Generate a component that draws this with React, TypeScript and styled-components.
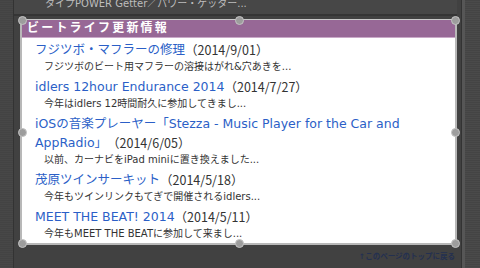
import styled, { createGlobalStyle } from 'styled-components';

type Entry = {
  title: string;
  date: string;
  summary: string;
};

const entries: Entry[] = [
  {
    title: 'フジツボ・マフラーの修理',
    date: '（2014/9/01）',
    summary: 'フジツボのビート用マフラーの溶接はがれ&穴あきを...',
  },
  {
    title: 'idlers 12hour Endurance 2014',
    date: '（2014/7/27）',
    summary: '今年はidlers 12時間耐久に参加してきまし...',
  },
  {
    title: 'iOSの音楽プレーヤー「Stezza - Music Player for the Car and AppRadio」',
    date: '（2014/6/05）',
    summary: '以前、カーナビをiPad miniに置き換えました...',
  },
  {
    title: '茂原ツインサーキット',
    date: '（2014/5/18）',
    summary: '今年もツインリンクもてぎで開催されるidlers...',
  },
  {
    title: 'MEET THE BEAT! 2014',
    date: '（2014/5/11）',
    summary: '今年もMEET THE BEATに参加して来まし...',
  },
];

// selection handles around the widget frame
const handles = [
  { left: '0%', top: '0%' },
  { left: '50%', top: '0%' },
  { left: '100%', top: '0%' },
  { left: '0%', top: '50%' },
  { left: '100%', top: '50%' },
  { left: '0%', top: '100%' },
  { left: '50%', top: '100%' },
  { left: '100%', top: '100%' },
];

const App = () => {
  return (
    <>
      <GlobalStyle />
      <Page>
        <LeftRail />
        <Main>
          <TopBar>
            <TopText>タイプPOWER Getter／パワー・ゲッター...</TopText>
          </TopBar>
          <Panel>
            <Header>ビートライフ更新情報</Header>
            <List>
              {entries.map((e) => (
                <Item key={e.date}>
                  <Title>
                    <Link href="#">{e.title}</Link>
                    <Date>{e.date}</Date>
                  </Title>
                  <Summary>{e.summary}</Summary>
                </Item>
              ))}
            </List>
            {handles.map((h, i) => (
              <Handle key={i} $left={h.left} $top={h.top} />
            ))}
          </Panel>
          <Footer>
            <TopLink href="#">↑このページのトップに戻る</TopLink>
          </Footer>
        </Main>
        <RightRail />
      </Page>
    </>
  );
};

const GlobalStyle = createGlobalStyle`
  body {
    margin: 0;
    background: #414141;
    font-family: "DejaVu Sans", "Noto Sans CJK JP", sans-serif;
  }
`;

const Page = styled.div`
  display: flex;
  width: 480px;
  height: 268px;
  overflow: hidden;
  background: #414141;
`;

const LeftRail = styled.div`
  width: 13px;
  flex-shrink: 0;
  background: repeating-linear-gradient(
    0deg,
    #474747 0px,
    #474747 1px,
    #434343 1px,
    #434343 2px
  );
  border-right: 1px solid #333;
`;

const RightRail = styled.div`
  width: 15px;
  flex-shrink: 0;
  border-left: 3px solid #565656;
  background: repeating-linear-gradient(
    0deg,
    #4a4a4a 0px,
    #4a4a4a 1px,
    #444 1px,
    #444 2px
  );
`;

const Main = styled.div`
  flex: 1;
  display: flex;
  flex-direction: column;
  padding: 0 4px 0 0;
  border-right: 1px solid #333;
`;

const TopBar = styled.div`
  height: 14px;
  background: #474747;
  border-bottom: 2px solid #353535;
  overflow: hidden;
  margin-bottom: 3px;
`;

const TopText = styled.div`
  margin: -4px 0 0 31px;
  font-size: 10px;
  line-height: 15px;
  color: #bdbdbd;
  white-space: nowrap;
`;

const Panel = styled.div`
  position: relative;
  margin-left: 6px;
  height: 226px;
  box-sizing: border-box;
  background: #fff;
  border: 2px solid #b8b8b8;
  border-top: 1px solid #c8c8c8;
`;

const Header = styled.div`
  height: 17px;
  background: #976896;
  border-bottom: 1px solid #c9a9c8;
  color: #fff;
  font-weight: bold;
  font-size: 12px;
  line-height: 17px;
  letter-spacing: 2.2px;
  padding-left: 5px;
`;

const List = styled.div`
  padding: 2px 10px 0 13px;
`;

const Item = styled.div`
  margin-bottom: 3px;
`;

const Title = styled.div`
  font-size: 12.5px;
  line-height: 19px;
`;

const Link = styled.a`
  color: #2b5fc7;
  text-decoration: none;
`;

const Date = styled.span`
  display: inline-block;
  vertical-align: top;
  line-height: 19px;
  font-family: "Noto Sans CJK JP", sans-serif;
  color: #333;
`;

const Summary = styled.div`
  font-size: 10px;
  line-height: 15px;
  color: #333;
  padding-left: 9px;
`;

const Handle = styled.div<{ $left: string; $top: string }>`
  position: absolute;
  left: ${(p) => p.$left};
  top: ${(p) => p.$top};
  width: 7px;
  height: 7px;
  margin: -4px 0 0 -4px;
  border-radius: 50%;
  background: #9d9d9d;
  border: 1px solid #c4c4c4;
`;

const Footer = styled.div`
  display: flex;
  justify-content: flex-end;
  padding: 5px 2px 0 0;
`;

const TopLink = styled.a`
  font-size: 7.5px;
  font-weight: bold;
  color: #243050;
  text-decoration: none;
`;

export default App;
